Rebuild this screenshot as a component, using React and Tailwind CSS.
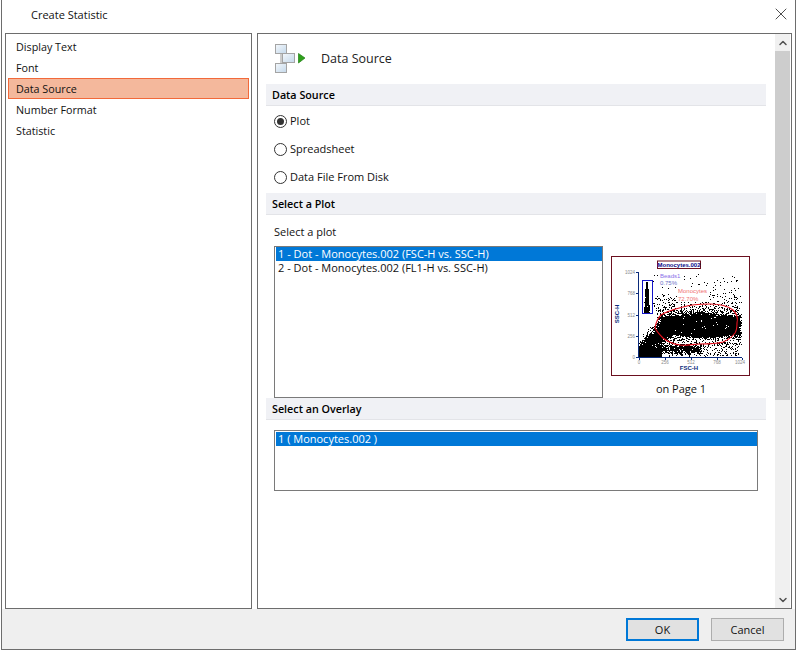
import React, { useMemo } from "react";
import { X, ChevronUp, ChevronDown } from "lucide-react";

const font = "font-['Open_Sans',sans-serif]";

// small seeded generator so the scatter is the same on each render
function makeRandom(seed) {
  let s = seed;
  return () => {
    s = (s * 1664525 + 1013904223) % 4294967296;
    return s / 4294967296;
  };
}

function gauss(rand) {
  return (rand() + rand() + rand() + rand() - 2) / 1.15;
}

function scatterPath() {
  const rand = makeRandom(17);
  let d = "";
  const dot = (x, y) => {
    const px = Math.round(x);
    const py = Math.round(y);
    if (px < 28 || px > 131 || py < 16 || py > 100) return;
    // the gate labels sit on clear ground
    if (px > 47 && px < 73 && py > 15 && py < 31) return;
    if (px > 65 && px < 98 && py > 30 && py < 46) return;
    d += `M${px} ${py}h1v1h-1z`;
  };
  // solid core
  for (let i = 0; i < 4300; i++) {
    const x = 50 + rand() * 78;
    const bulge = 1 - Math.abs(x - 92) / 110;
    dot(x, 69 + (rand() * 2 - 1) * 13 * bulge);
  }
  // halo round the core
  for (let i = 0; i < 2600; i++) {
    dot(46 + rand() * 84, 69 + gauss(rand) * 17);
  }
  // lower left tail
  for (let i = 0; i < 2800; i++) {
    const t = rand();
    dot(29 + t * 30 + gauss(rand) * 9, 99 - t * 32 + gauss(rand) * 7);
  }
  // bottom corner
  for (let i = 0; i < 800; i++) {
    dot(28 + rand() * 22, 91 + rand() * 10);
  }
  // lower band
  for (let i = 0; i < 650; i++) {
    dot(45 + rand() * 45, 93 + gauss(rand) * 5);
  }
  // gated column, narrow at the top
  for (let i = 0; i < 550; i++) {
    const t = rand();
    const w = 1 + t * 5;
    dot(35.5 + (rand() - 0.5) * w, 26 + t * 31);
  }
  // sparse points
  for (let i = 0; i < 110; i++) {
    dot(42 + rand() * 88, 18 + rand() * 30);
  }
  for (let i = 0; i < 170; i++) {
    dot(42 + rand() * 86, 38 + rand() * 18);
  }
  for (let i = 0; i < 200; i++) {
    dot(70 + rand() * 58, 86 + rand() * 14);
  }
  return d;
}

function PlotThumb() {
  const dots = useMemo(() => scatterPath(), []);
  const labelFont = "Liberation Sans, sans-serif";
  return (
    <svg width="140" height="120" viewBox="0 0 140 120" className="block" shapeRendering="crispEdges">
      <rect x="0.5" y="0.5" width="138" height="119" fill="#fff" stroke="#6b0f1f" />
      <path d={dots} fill="#000" />
      <path d="M27.5 16v85.5H131" fill="none" stroke="#0a2a7a" />
      <path d="M25 16h3M25 37.5h3M25 59h3M25 80h3M25 101h3M28 102v2M54 102v2M80 102v2M106 102v2M131 102v2" stroke="#0a2a7a" />
      <rect x="31.5" y="24.5" width="10" height="33" fill="none" stroke="#1414c8" />
      <g shapeRendering="auto">
        <path
          d="M44 72C45 66 47 62 50 59C56 55 64 53 72 51C81 48 90 48 99 48C108 48 117 50 122 54C126 58 127 63 126 67C126 71 126 74 124 77C121 81 117 84 112 86C105 88 97 88 89 88C82 88 75 90 69 89C62 88 57 86 52 82C49 79 46 76 44 72Z"
          fill="none"
          stroke="#e8101c"
          strokeWidth="1.1"
        />
        <rect x="46.5" y="5" width="43" height="7.5" fill="#fff" stroke="#6b0f1f" />
        <text x="68" y="11" textAnchor="middle" fontSize="6" fill="#0a0a8a" fontFamily={labelFont} fontWeight="700">
          Monocytes.002
        </text>
        <text x="49" y="22" fontSize="6" fill="#8a70e8" fontFamily={labelFont}>Beads1</text>
        <text x="49" y="29" fontSize="6" fill="#6a70c8" fontFamily={labelFont}>0.75%</text>
        <text x="67" y="37" fontSize="6" fill="#f07070" fontFamily={labelFont}>Monocytes</text>
        <text x="67" y="45" fontSize="6" fill="#f07070" fontFamily={labelFont}>72.70%</text>
        <g fontSize="4.5" fill="#888" fontFamily={labelFont} textAnchor="end">
          <text x="24" y="18">1024</text>
          <text x="24" y="39">768</text>
          <text x="24" y="61">512</text>
          <text x="24" y="82">256</text>
          <text x="24" y="103">0</text>
        </g>
        <g fontSize="4.5" fill="#888" fontFamily={labelFont} textAnchor="middle">
          <text x="28" y="108">0</text>
          <text x="54" y="108">256</text>
          <text x="80" y="108">512</text>
          <text x="106" y="108">768</text>
          <text x="129" y="108">1024</text>
        </g>
        <text x="78" y="114" textAnchor="middle" fontSize="6" fontWeight="700" fill="#0a2a7a" fontFamily={labelFont}>FSC-H</text>
        <text transform="translate(8 58) rotate(-90)" textAnchor="middle" fontSize="6" fontWeight="700" fill="#0a2a7a" fontFamily={labelFont}>SSC-H</text>
      </g>
    </svg>
  );
}

function SourceIcon() {
  return (
    <svg width="32" height="30" viewBox="0 0 32 30" className="block">
      <defs>
        <linearGradient id="boxFill" x1="0" y1="0" x2="1" y2="1">
          <stop offset="0" stopColor="#f4f8fc" />
          <stop offset="1" stopColor="#c4d8ea" />
        </linearGradient>
      </defs>
      <path d="M6 10v9M12 14v-2M12 19v-1" stroke="#9a9a9a" fill="none" />
      <rect x="0.5" y="0.5" width="11" height="9" fill="url(#boxFill)" stroke="#a4a4a4" />
      <rect x="7.5" y="9.5" width="12" height="9" fill="url(#boxFill)" stroke="#a4a4a4" />
      <rect x="0.5" y="19.5" width="11" height="9" fill="url(#boxFill)" stroke="#a4a4a4" />
      <path d="M23.5 9.5l6.5 4.5-6.5 5z" fill="#2fa01c" stroke="#1f7f14" strokeWidth="0.7" />
    </svg>
  );
}

function SectionHead({ children }) {
  return (
    <div className="h-[22px] w-[500px] bg-[#f0f1f5] border-b border-[#e3e4e8] flex items-center pl-[6px] pt-px text-[10.75px] font-semibold text-black">
      {children}
    </div>
  );
}

function Radio({ label, checked }) {
  return (
    <div className="h-[28px] flex items-center pl-[8px]">
      <span className="w-[13px] h-[13px] rounded-full border border-[#333] bg-white flex items-center justify-center">
        {checked && <span className="w-[7px] h-[7px] rounded-full bg-[#333]" />}
      </span>
      <span className="ml-[3px] text-[11px] text-[#111]">{label}</span>
    </div>
  );
}

const navItems = ["Display Text", "Font", "Data Source", "Number Format", "Statistic"];

export default function App() {
  return (
    <div className={`w-[796px] h-[650px] pl-px bg-white overflow-hidden ${font}`}>
      <div className="h-full flex flex-col border-l border-r border-b border-[#6d6d6d] bg-white">
        <div className="h-[33px] shrink-0 flex items-center justify-between pl-[29px] pr-[4px] pb-[3px]">
          <span className="text-[11px] text-[#111]">Create Statistic</span>
          <X size={20} strokeWidth={0.9} color="#111" className="mb-[2px]" />
        </div>

        <div className="h-[576px] shrink-0 flex pl-[3px]">
          <div className="w-[247px] border border-[#6d6d6d] pt-[2px] px-[2px]">
            {navItems.map((item) => (
              <div
                key={item}
                className={
                  item === "Data Source"
                    ? "h-[21px] flex items-center pl-[7px] pt-px text-[10.75px] text-[#111] bg-[#f4b89c] border border-[#f2693a]"
                    : "h-[21px] flex items-center pl-[8px] pt-px text-[10.75px] text-[#111]"
                }
              >
                {item}
              </div>
            ))}
          </div>

          <div className="w-[535px] ml-[5px] border border-[#6d6d6d] flex pr-px">
            <div className="w-[517px] pl-[8px]">
              <div className="h-[50px] flex items-center pl-[9px]">
                <SourceIcon />
                <span className="ml-[14px] text-[12.5px] text-[#222]">Data Source</span>
              </div>

              <SectionHead>Data Source</SectionHead>
              <div className="pt-px">
                <Radio label="Plot" checked />
                <Radio label="Spreadsheet" />
                <Radio label="Data File From Disk" />
              </div>

              <div className="mt-[2px]">
                <SectionHead>Select a Plot</SectionHead>
              </div>
              <div className="mt-[10px] h-[14px] pl-[8px] flex items-center text-[11px] text-[#111]">Select a plot</div>
              <div className="mt-[7px] flex pl-[8px]">
                <div className="w-[329px] h-[152px] border border-[#7a7a7a] pl-px text-[11px] text-[#111]">
                  <div className="h-[14px] bg-[#0078d7] text-white flex items-center pl-[2px]">
                    1 - Dot - Monocytes.002 (FSC-H vs. SSC-H)
                  </div>
                  <div className="h-[14px] flex items-center pl-[2px]">
                    2 - Dot - Monocytes.002 (FL1-H vs. SSC-H)
                  </div>
                </div>
                <div className="ml-[8px] w-[140px] pt-[10px]">
                  <PlotThumb />
                  <div className="mt-[5px] text-center text-[11px] text-[#111]">on Page 1</div>
                </div>
              </div>

              <SectionHead>Select an Overlay</SectionHead>
              <div className="mt-[10px] ml-[8px] w-[484px] h-[61px] border border-[#7a7a7a] pl-px pt-px text-[11px]">
                <div className="h-[14px] bg-[#0078d7] text-white flex items-center pl-[2px]">1 ( Monocytes.002 )</div>
              </div>
            </div>

            <div className="w-[15px] flex flex-col bg-[#f0f0f0]">
              <div className="h-[17px] flex items-center justify-center">
                <ChevronUp size={12} strokeWidth={3} color="#505050" />
              </div>
              <div className="h-[349px] bg-[#cdcdcd]" />
              <div className="flex-1" />
              <div className="h-[17px] flex items-center justify-center">
                <ChevronDown size={12} strokeWidth={3} color="#505050" />
              </div>
            </div>
          </div>
        </div>

        <div className="flex-1 bg-[#efefef] flex justify-end gap-[12px] pt-[9px] pr-[11px]">
          <button className="w-[73px] h-[23px] border-2 border-[#0078d7] bg-[#e1e1e1] pt-px text-[11px] text-[#111]">OK</button>
          <button className="w-[73px] h-[23px] border border-[#adadad] bg-[#e1e1e1] pt-px text-[11px] text-[#111]">Cancel</button>
        </div>
      </div>
    </div>
  );
}
